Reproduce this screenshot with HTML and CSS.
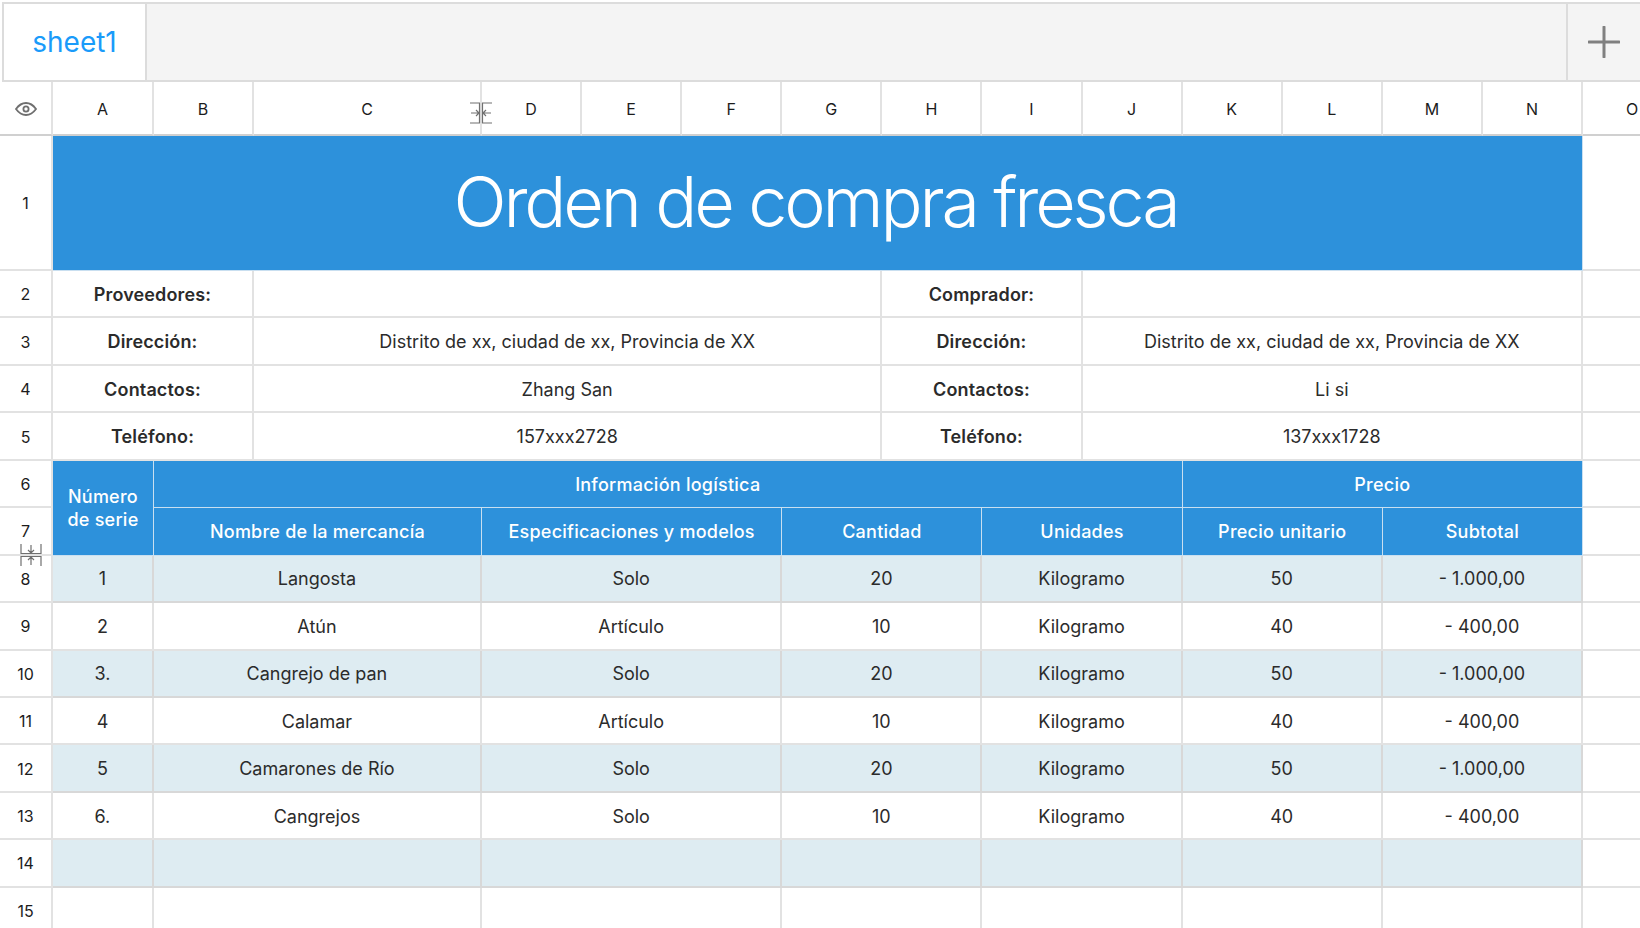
FILE: index.html
```html
<!DOCTYPE html>
<html lang="es">
<head>
    <meta charset="UTF-8">
    <meta name="viewport" content="width=device-width, initial-scale=1.0">
    <title>Orden de compra fresca</title>
    <link rel="stylesheet" href="styles.css">
</head>
<body>

<!-- Sheet tabs -->
<div class="tabbar">
    <div class="tab">sheet1</div>
    <div class="tab-space"></div>
    <div class="tab-add">
        <svg width="32" height="32" viewBox="0 0 32 32"><path d="M16 1V31M1 16H31" stroke="#808080" stroke-width="3" stroke-linecap="round" fill="none"/></svg>
    </div>
</div>

<div class="sheet">
    <!-- Column headers -->
    <div class="cell head">
        <svg width="22" height="14" viewBox="0 0 22 14"><path d="M1 7C4 2.800 7.300 1 11 1S18 2.800 21 7C18 11.200 14.700 13 11 13S4 11.200 1 7Z" stroke="#6f6f6f" stroke-width="1.800" fill="none"/><circle cx="11" cy="7" r="2.600" stroke="#6f6f6f" stroke-width="1.800" fill="none"/></svg>
    </div>
    <div class="cell head">A</div>
    <div class="cell head">B</div>
    <div class="cell head">C</div>
    <div class="cell head">D</div>
    <div class="cell head">E</div>
    <div class="cell head">F</div>
    <div class="cell head">G</div>
    <div class="cell head">H</div>
    <div class="cell head">I</div>
    <div class="cell head">J</div>
    <div class="cell head">K</div>
    <div class="cell head">L</div>
    <div class="cell head">M</div>
    <div class="cell head">N</div>
    <div class="cell head">O</div>

    <!-- Row 1 -->
    <div class="cell num">1</div>
    <div class="cell blue title span-14">Orden de compra fresca</div>
    <div class="cell"></div>

    <!-- Rows 2-5 -->
    <div class="cell num">2</div>
    <div class="cell label span-2">Proveedores:</div>
    <div class="cell span-5"></div>
    <div class="cell label span-2">Comprador:</div>
    <div class="cell span-5"></div>
    <div class="cell"></div>

    <div class="cell num">3</div>
    <div class="cell label span-2">Dirección:</div>
    <div class="cell span-5">Distrito de xx, ciudad de xx, Provincia de XX</div>
    <div class="cell label span-2">Dirección:</div>
    <div class="cell span-5">Distrito de xx, ciudad de xx, Provincia de XX</div>
    <div class="cell"></div>

    <div class="cell num">4</div>
    <div class="cell label span-2">Contactos:</div>
    <div class="cell span-5">Zhang San</div>
    <div class="cell label span-2">Contactos:</div>
    <div class="cell span-5">Li si</div>
    <div class="cell"></div>

    <div class="cell num">5</div>
    <div class="cell label span-2">Teléfono:</div>
    <div class="cell span-5">157xxx2728</div>
    <div class="cell label span-2">Teléfono:</div>
    <div class="cell span-5">137xxx1728</div>
    <div class="cell"></div>

    <!-- Rows 6-7: table header -->
    <div class="cell num">6</div>
    <div class="cell blue serial">Número<br>de serie</div>
    <div class="cell blue span-9">Información logística</div>
    <div class="cell blue span-4">Precio</div>
    <div class="cell"></div>

    <div class="cell num">7</div>
    <div class="cell blue span-2">Nombre de la mercancía</div>
    <div class="cell blue span-3">Especificaciones y modelos</div>
    <div class="cell blue span-2">Cantidad</div>
    <div class="cell blue span-2">Unidades</div>
    <div class="cell blue span-2">Precio unitario</div>
    <div class="cell blue span-2">Subtotal</div>
    <div class="cell"></div>

    <!-- Rows 8-15: data -->
    <div class="cell num">8</div>
    <div class="cell tint">1</div>
    <div class="cell tint span-2">Langosta</div>
    <div class="cell tint span-3">Solo</div>
    <div class="cell tint span-2">20</div>
    <div class="cell tint span-2">Kilogramo</div>
    <div class="cell tint span-2">50</div>
    <div class="cell tint span-2">- 1.000,00</div>
    <div class="cell"></div>

    <div class="cell num">9</div>
    <div class="cell">2</div>
    <div class="cell span-2">Atún</div>
    <div class="cell span-3">Artículo</div>
    <div class="cell span-2">10</div>
    <div class="cell span-2">Kilogramo</div>
    <div class="cell span-2">40</div>
    <div class="cell span-2">- 400,00</div>
    <div class="cell"></div>

    <div class="cell num">10</div>
    <div class="cell tint">3.</div>
    <div class="cell tint span-2">Cangrejo de pan</div>
    <div class="cell tint span-3">Solo</div>
    <div class="cell tint span-2">20</div>
    <div class="cell tint span-2">Kilogramo</div>
    <div class="cell tint span-2">50</div>
    <div class="cell tint span-2">- 1.000,00</div>
    <div class="cell"></div>

    <div class="cell num">11</div>
    <div class="cell">4</div>
    <div class="cell span-2">Calamar</div>
    <div class="cell span-3">Artículo</div>
    <div class="cell span-2">10</div>
    <div class="cell span-2">Kilogramo</div>
    <div class="cell span-2">40</div>
    <div class="cell span-2">- 400,00</div>
    <div class="cell"></div>

    <div class="cell num">12</div>
    <div class="cell tint">5</div>
    <div class="cell tint span-2">Camarones de Río</div>
    <div class="cell tint span-3">Solo</div>
    <div class="cell tint span-2">20</div>
    <div class="cell tint span-2">Kilogramo</div>
    <div class="cell tint span-2">50</div>
    <div class="cell tint span-2">- 1.000,00</div>
    <div class="cell"></div>

    <div class="cell num">13</div>
    <div class="cell">6.</div>
    <div class="cell span-2">Cangrejos</div>
    <div class="cell span-3">Solo</div>
    <div class="cell span-2">10</div>
    <div class="cell span-2">Kilogramo</div>
    <div class="cell span-2">40</div>
    <div class="cell span-2">- 400,00</div>
    <div class="cell"></div>

    <div class="cell num">14</div>
    <div class="cell tint"></div>
    <div class="cell tint span-2"></div>
    <div class="cell tint span-3"></div>
    <div class="cell tint span-2"></div>
    <div class="cell tint span-2"></div>
    <div class="cell tint span-2"></div>
    <div class="cell tint span-2"></div>
    <div class="cell"></div>

    <div class="cell num">15</div>
    <div class="cell"></div>
    <div class="cell span-2"></div>
    <div class="cell span-3"></div>
    <div class="cell span-2"></div>
    <div class="cell span-2"></div>
    <div class="cell span-2"></div>
    <div class="cell span-2"></div>
    <div class="cell"></div>

    <!-- Resize handles lying over the grid -->
    <svg class="handle handle-col" width="22" height="22" viewBox="0 0 22 22">
        <path d="M0 1H10M12 1H22M0 21H10M12 21H22M9.500 1V21M12.500 1V21M1 11H9M6 8L9 11L6 14M21 11H13M16 8L13 11L16 14" stroke="#707070" stroke-width="1.200" fill="none"/>
    </svg>
    <svg class="handle handle-row" width="22" height="22" viewBox="0 0 22 22">
        <path d="M1 0V9.500H21V0M1 22V12.500H21V22M11 1V9M8 6L11 9L14 6M11 21V13M8 16L11 13L14 16" stroke="#707070" stroke-width="1.200" fill="none"/>
    </svg>
</div>

</body>
</html>
```

FILE: styles.css
```css
body {
    margin: 0;
    width: 1640px;
    height: 928px;
    overflow: hidden;
    background-color: #ffffff;
    font-family: Inter, "Liberation Sans", sans-serif;
    color: #2b2b2b;
}

/* Tab bar */
.tabbar {
    display: flex;
    height: 80px;
    margin: 2px 0 0 2px;
    box-sizing: border-box;
    border: 2px solid #dcdcdc;
    border-right: none;
    background-color: #f4f4f4;
}
.tab {
    flex: 0 0 143px;
    box-sizing: border-box;
    border-right: 2px solid #dcdcdc;
    background-color: #ffffff;
    color: #1a9bfa;
    font-size: 28px;
    display: flex;
    align-items: center;
    justify-content: center;
}
.tab-space {
    flex: 1;
}
.tab-add {
    flex: 0 0 74px;
    box-sizing: border-box;
    border-left: 2px solid #dcdcdc;
    display: flex;
    align-items: center;
    justify-content: center;
}

/* Sheet grid */
.sheet {
    position: relative;
    display: grid;
    grid-template-columns: 53px 100.9px 100.1px 228px repeat(11, 100.1px) 100px;
    grid-template-rows: 54px 135px repeat(14, 47.45px);
    width: 1640px;
    height: 846px;
    overflow: hidden;
}
.cell {
    box-sizing: border-box;
    display: flex;
    align-items: center;
    justify-content: center;
    text-align: center;
    padding-top: 1px;
    border-right: 2px solid #e2e2e2;
    border-bottom: 2px solid #e2e2e2;
    font-size: 18px;
    white-space: nowrap;
}
.head {
    font-size: 16px;
    color: #1c1c1c;
    border-bottom-color: #d0d0d0;
}
.num {
    font-size: 16px;
    color: #1c1c1c;
}
.label {
    font-weight: 600;
    letter-spacing: 0.15px;
}
.blue {
    background-color: #2d91db;
    color: #ffffff;
    font-weight: 500;
    letter-spacing: 0.25px;
    border-right: 1px solid #c9dff0;
    border-bottom: 1px solid #c9dff0;
}
.title {
    padding: 0 4px 3px 0;
    font-size: 70px;
    font-weight: 340;
    letter-spacing: -3.15px;
}
.serial {
    grid-row: span 2;
    line-height: 23px;
}
.tint {
    background-color: #deecf2;
    border-right-color: #d8d8d8;
    border-bottom-color: #d8d8d8;
}
.span-2 { grid-column: span 2; }
.span-3 { grid-column: span 3; }
.span-4 { grid-column: span 4; }
.span-5 { grid-column: span 5; }
.span-9 { grid-column: span 9; }
.span-14 { grid-column: span 14; }

/* Resize handles */
.handle {
    position: absolute;
}
.handle-col {
    left: 470px;
    top: 20px;
}
.handle-row {
    left: 20px;
    top: 462px;
}
```
